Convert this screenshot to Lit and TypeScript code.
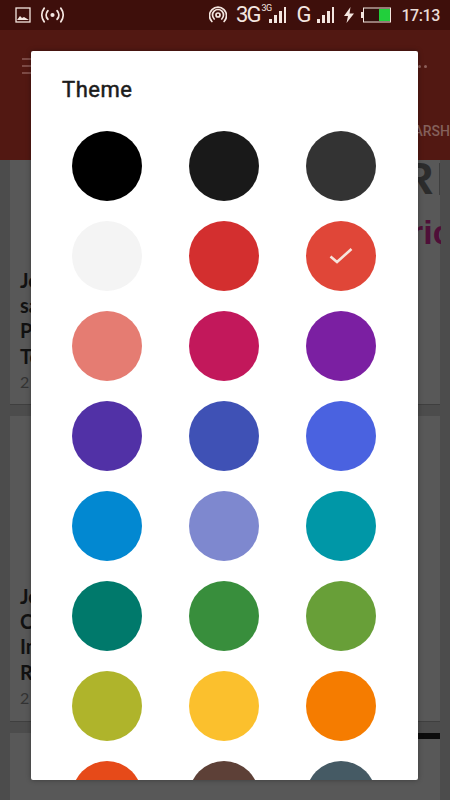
import { LitElement, html, css, svg } from "lit";
import { customElement } from "lit/decorators.js";

const COLORS = [
  "#000000", "#191919", "#333333",
  "#f4f4f4", "#d32f2f", "#e04638",
  "#e57c72", "#c2185b", "#7b1fa2",
  "#5131a6", "#3f51b5", "#4a62e0",
  "#0288d1", "#7e88cf", "#0097a7",
  "#00796b", "#388e3c", "#689f38",
  "#afb42b", "#fbc02d", "#f57c00",
  "#e64a19", "#5d4037", "#455a64",
];

const bars = () => svg`
  <rect x="0" y="12" width="3" height="4"/>
  <rect x="5" y="8" width="3" height="8"/>
  <rect x="10" y="4" width="3" height="12"/>
  <rect x="15" y="0" width="2" height="16"/>`;

@customElement("app-root")
export class AppRoot extends LitElement {
  static styles = css`
    :host {
      display: block;
      position: relative;
      width: 450px;
      height: 800px;
      overflow: hidden;
      background: #4c4c4c;
      font-family: "Lato", "Liberation Sans", sans-serif;
    }
    .status {
      height: 30px;
      background: #3e0f0b;
      color: #f4e6e0;
      display: flex;
      align-items: center;
      padding: 0 10px 0 15px;
      box-sizing: border-box;
    }
    .status svg { display: block; flex: none; }
    .broadcast { margin-left: 10px; }
    .spacer { flex: 1; }
    .net {
      font-family: "Roboto", sans-serif;
      font-size: 22px;
      line-height: 30px;
      letter-spacing: -2px;
    }
    .net.three { margin-left: 9px; }
    .net.g { margin-left: 10px; margin-right: 1px; }
    .mini {
      font-family: "Roboto", sans-serif;
      font-size: 9px;
      line-height: 9px;
      letter-spacing: -0.5px;
      align-self: flex-start;
      margin-top: 4px;
      width: 12px;
      margin-left: 2px;
      margin-right: -4px;
    }
    .sig2 { margin-left: 7px; }
    .bolt { margin-left: 9px; }
    .batt { margin-left: 6px; }
    .time {
      margin-left: 10px;
      font-family: "Roboto", sans-serif;
      font-size: 16px;
      font-weight: 500;
      letter-spacing: -0.4px;
      color: #eadcd6;
    }
    .toolbar {
      height: 130px;
      background: #521812;
      display: flex;
      flex-direction: column;
      box-sizing: border-box;
      padding: 28px 22px 0;
    }
    .toolbar-top { display: flex; justify-content: space-between; align-items: center; }
    .menu { width: 14px; display: flex; flex-direction: column; gap: 5px; }
    .menu i { display: block; height: 2px; background: #7d4a45; }
    .dots { display: flex; gap: 3px; margin-right: 1px; }
    .dots i { display: block; width: 3px; height: 3px; border-radius: 50%; background: #8d5f5a; }
    .tab {
      margin-top: 49px;
      align-self: flex-end;
      margin-right: -22px;
      font-family: "Roboto", sans-serif;
      font-size: 14px;
      font-weight: 500;
      color: #84605b;
      white-space: nowrap;
    }
    .content { padding: 0 10px; display: flex; flex-direction: column; gap: 11px; }
    .card {
      background: #585858;
      border-bottom: 1px solid #3f3f3f;
      box-sizing: border-box;
      padding: 0 10px;
      display: flex;
      flex-direction: column;
      justify-content: flex-end;
      overflow: hidden;
    }
    .card.one { height: 245px; padding-bottom: 9px; }
    .card.two { height: 306px; padding-bottom: 10px; }
    .card.three { height: 68px; border-bottom: 0; padding: 0; justify-content: flex-start; align-items: flex-end; }
    .bar { width: 22px; height: 6px; background: #0c0c0c; }
    .line {
      font-size: 20px;
      font-weight: 700;
      line-height: 25.3px;
      color: #111;
      white-space: nowrap;
    }
    .meta { font-size: 16px; line-height: 26px; color: #333; }
    .logo {
      position: absolute;
      left: 401px;
      top: 156px;
      font-family: "Liberation Sans", sans-serif;
      font-weight: 700;
      font-size: 45px;
      line-height: 46px;
      color: #2c2c2c;
    }
    .rule {
      position: absolute;
      left: 439px;
      top: 163px;
      width: 1px;
      height: 32px;
      background: #3e3e3e;
    }
    .brand {
      position: absolute;
      left: 400px;
      top: 212px;
      width: 41px;
      box-sizing: border-box;
      padding-left: 10px;
      overflow: hidden;
      font-family: "Liberation Sans", sans-serif;
      font-weight: 700;
      font-size: 34px;
      line-height: 40px;
      white-space: nowrap;
      color: #4f0f38;
    }
    .dialog {
      position: absolute;
      left: 31px;
      top: 51px;
      width: 387px;
      height: 729px;
      background: #fff;
      border-radius: 2px;
      overflow: hidden;
      box-sizing: border-box;
      padding: 26px 0 0 31px;
      box-shadow: 0 0 5px rgba(0, 0, 0, 0.35);
    }
    .title {
      font-family: "Roboto", sans-serif;
      font-size: 22px;
      font-weight: 400;
      line-height: 26px;
      color: #1c1c1c;
      letter-spacing: 0.5px;
      -webkit-text-stroke: 0.5px #1c1c1c;
    }
    .grid {
      margin-top: 28px;
      margin-left: 10px;
      display: grid;
      grid-template-columns: repeat(3, 70px);
      column-gap: 47px;
      row-gap: 20px;
    }
    .swatch {
      width: 70px;
      height: 70px;
      border-radius: 50%;
      display: flex;
      align-items: center;
      justify-content: center;
    }
  `;

  render() {
    return html`
      <div class="status">
        <svg width="16" height="16" viewBox="0 0 16 16" fill="none" stroke="currentColor">
          <rect x="1" y="1" width="14" height="14" stroke-width="1.3"/>
          <path d="M2 13l3-4 2 2 2-1 5 3z" fill="currentColor" stroke="none"/>
        </svg>
        <svg class="broadcast" width="23" height="18" viewBox="0 0 22 16" fill="none" stroke="currentColor" stroke-width="1.8" stroke-linecap="round">
          <circle cx="11" cy="8" r="2" fill="currentColor" stroke="none"/>
          <path d="M6.500 4a6 6 0 0 0 0 8M15.500 4a6 6 0 0 1 0 8M3 1.500a11 11 0 0 0 0 13M19 1.500a11 11 0 0 1 0 13"/>
        </svg>
        <div class="spacer"></div>
        <svg width="18" height="18" viewBox="0 0 18 18" fill="none" stroke="currentColor" stroke-width="1.7" stroke-linecap="round">
          <circle cx="9" cy="9" r="2"/>
          <path d="M5.200 13a5.500 5.500 0 1 1 7.600 0M2.900 15.500a8.500 8.500 0 1 1 12.200 0"/>
        </svg>
        <span class="net three">3G</span>
        <span class="mini">3G</span>
        <svg width="17" height="16" viewBox="0 0 17 16" fill="currentColor">${bars()}</svg>
        <span class="net g">G</span>
        <svg class="sig2" width="17" height="16" viewBox="0 0 17 16" fill="currentColor">${bars()}</svg>
        <svg class="bolt" width="12" height="16" viewBox="0 0 12 16" fill="currentColor">
          <path d="M7.500 0L1 9h4l-1.500 7L11 6.500H6.500z"/>
        </svg>
        <svg class="batt" width="30" height="16" viewBox="0 0 30 16">
          <rect x="0" y="5" width="2" height="6" fill="#f4e6e0"/>
          <rect x="2.500" y="1" width="27" height="14" fill="#32100c" stroke="#f4e6e0" stroke-width="1"/>
          <rect x="18" y="2" width="11" height="12" fill="#22cf3c"/>
        </svg>
        <span class="time">17:13</span>
      </div>
      <div class="toolbar">
        <div class="toolbar-top">
          <div class="menu"><i></i><i></i><i></i></div>
          <div class="dots"><i></i><i></i></div>
        </div>
        <div class="tab">ARSH</div>
      </div>
      <div class="content">
        <div class="card one">
          <div class="line">Jo</div>
          <div class="line">sa</div>
          <div class="line">P</div>
          <div class="line">To</div>
          <div class="meta">2</div>
        </div>
        <div class="card two">
          <div class="line">Jo</div>
          <div class="line">C</div>
          <div class="line">In</div>
          <div class="line">R</div>
          <div class="meta">2</div>
        </div>
        <div class="card three"><div class="bar"></div></div>
      </div>
      <div class="logo">R</div>
      <div class="rule"></div>
      <div class="brand">ric</div>
      <div class="dialog">
        <div class="title">Theme</div>
        <div class="grid">
          ${COLORS.map(
            (c, i) => html`<div class="swatch" style="background:${c}">
              ${i === 5
                ? html`<svg width="26" height="22" viewBox="0 0 26 22" fill="none" stroke="#f6e4dc" stroke-width="2.600">
                    <path d="M2.500 11.500l6.500 5.500L23.500 4"/>
                  </svg>`
                : ""}
            </div>`
          )}
        </div>
      </div>
    `;
  }
}
